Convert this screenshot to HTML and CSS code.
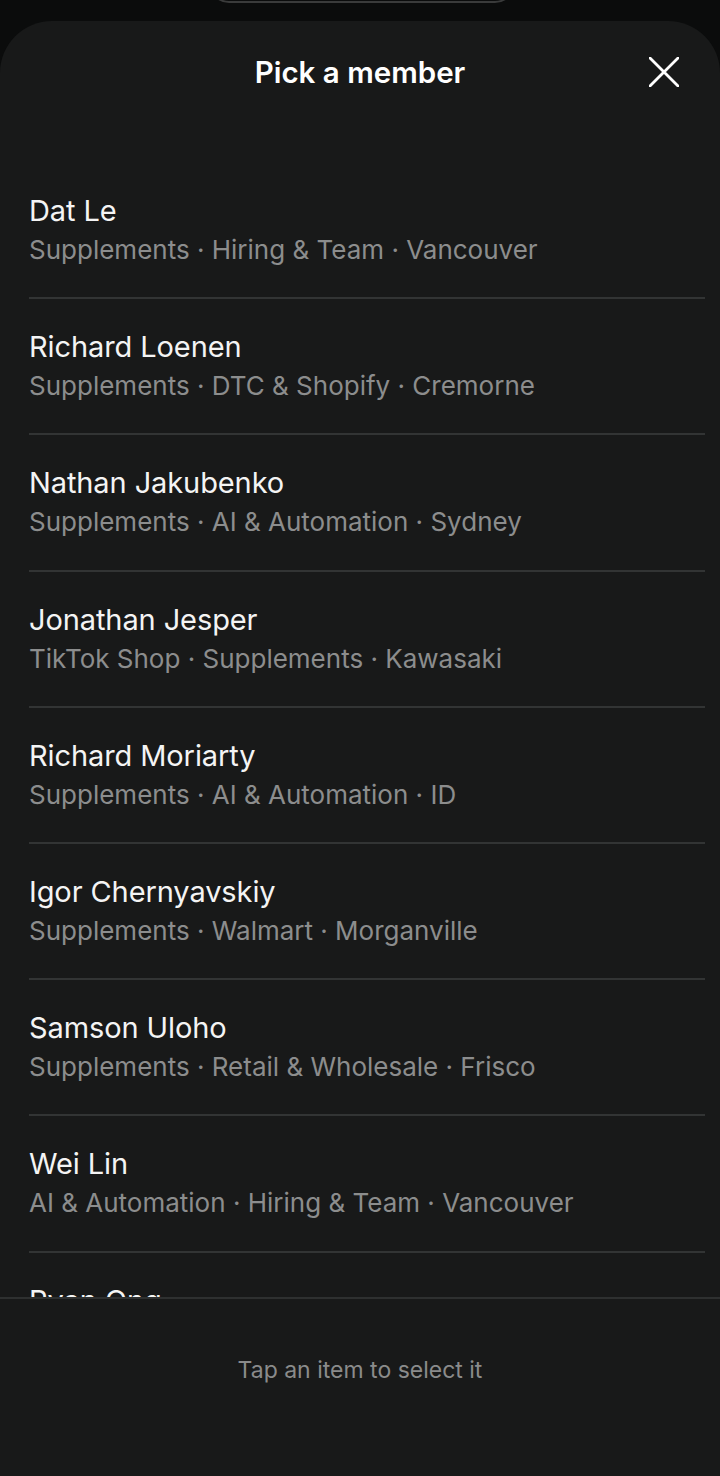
FILE: index.html
```html
<!DOCTYPE html>
<html lang="en">
<head>
<meta charset="utf-8">
<title>Pick a member</title>
<link rel="stylesheet" href="styles.css">
</head>
<body>
<div class="backdrop">
  <div class="pill"></div>
</div>
<div class="sheet">
  <header class="sheet-header">
    <h1 class="title">Pick a member</h1>
    <button class="close" aria-label="Close">
      <svg width="32" height="32" viewBox="0 0 32 32"><path d="M1 1 L31 31 M31 1 L1 31" stroke="#ffffff" stroke-width="3" stroke-linecap="round" fill="none"/></svg>
    </button>
  </header>
  <ul class="list">
    <li class="row"><div class="name">Dat Le</div><div class="meta">Supplements · Hiring &amp; Team · Vancouver</div></li>
    <li class="row"><div class="name">Richard Loenen</div><div class="meta">Supplements · DTC &amp; Shopify · Cremorne</div></li>
    <li class="row"><div class="name">Nathan Jakubenko</div><div class="meta">Supplements · AI &amp; Automation · Sydney</div></li>
    <li class="row"><div class="name">Jonathan Jesper</div><div class="meta">TikTok Shop · Supplements · Kawasaki</div></li>
    <li class="row"><div class="name">Richard Moriarty</div><div class="meta">Supplements · AI &amp; Automation · ID</div></li>
    <li class="row"><div class="name">Igor Chernyavskiy</div><div class="meta">Supplements · Walmart · Morganville</div></li>
    <li class="row"><div class="name">Samson Uloho</div><div class="meta">Supplements · Retail &amp; Wholesale · Frisco</div></li>
    <li class="row"><div class="name">Wei Lin</div><div class="meta">AI &amp; Automation · Hiring &amp; Team · Vancouver</div></li>
    <li class="row"><div class="name">Ryan Ong</div><div class="meta">Supplements · DTC &amp; Shopify · Singapore</div></li>
  </ul>
  <footer class="footer">Tap an item to select it</footer>
</div>
</body>
</html>
```

FILE: styles.css
```css
* { box-sizing: border-box; }
html, body {
  margin: 0;
  padding: 0;
  height: 1476px;
  overflow: hidden;
  background: #0b0c0c;
  font-family: Inter, "Noto Sans", "Liberation Sans", sans-serif;
}
.backdrop {
  height: 21px;
  display: flex;
  justify-content: center;
  overflow: hidden;
}
.pill {
  width: 306px;
  height: 40px;
  margin-top: -37px;
  margin-left: 4px;
  border: 2px solid #3a3b3b;
  border-radius: 20px;
}
.sheet {
  height: 1455px;
  background: #181919;
  border-radius: 52px 52px 0 0;
  display: flex;
  flex-direction: column;
  overflow: hidden;
}
.sheet-header {
  height: 102px;
  flex: none;
  display: flex;
  align-items: center;
  justify-content: center;
  position: relative;
}
.title {
  margin: 0;
  font-size: 29.5px;
  font-weight: 600;
  color: #ffffff;
  letter-spacing: 0;
}
.close {
  position: absolute;
  right: 41px;
  top: 36px;
  width: 30px;
  height: 30px;
  padding: 0;
  border: 0;
  background: none;
  display: flex;
}
.close svg { width: 30px; height: 30px; }
.list {
  list-style: none;
  margin: 0;
  padding: 40px 15px 0 29px;
  flex: 1;
  overflow: hidden;
}
.row {
  height: 136.2px;
  padding-top: 30px;
  border-bottom: 2px solid #323434;
}
.name {
  font-size: 29px;
  line-height: 36px;
  color: #f4f4f4;
  letter-spacing: -0.1px;
}
.meta {
  font-size: 26px;
  line-height: 42px;
  color: #8c8d8d;
  letter-spacing: 0;
}
.footer {
  flex: none;
  height: 179px;
  border-top: 2px solid #2e3030;
  padding-top: 56px;
  text-align: center;
  font-size: 23px;
  line-height: 30px;
  color: #8a8b8b;
}
```
